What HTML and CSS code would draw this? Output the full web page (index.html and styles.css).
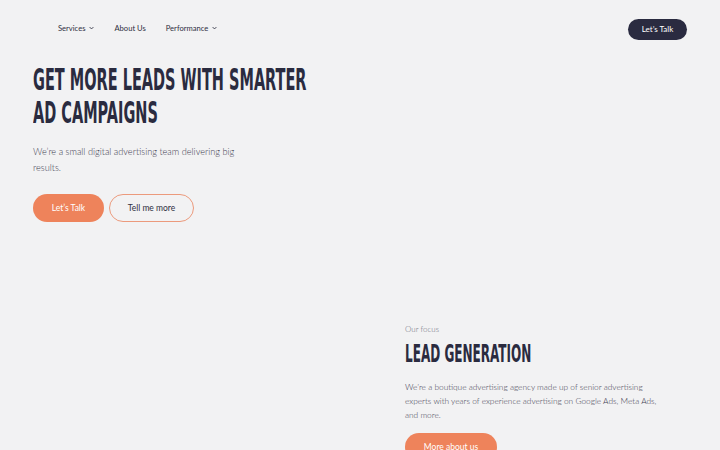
FILE: index.html
```html
<!DOCTYPE html>
<html lang="en">
<head>
<meta charset="utf-8">
<title>Leads</title>
<link rel="stylesheet" href="styles.css">
</head>
<body>
<header class="header">
  <nav class="nav">
    <a class="nav-link" href="#">Services <svg class="chev" viewBox="0 0 8 5" width="5" height="4"><path d="M1 1l3 3 3-3" fill="none" stroke="currentColor" stroke-width="1.4"/></svg></a>
    <a class="nav-link" href="#">About Us</a>
    <a class="nav-link" href="#">Performance <svg class="chev" viewBox="0 0 8 5" width="5" height="4"><path d="M1 1l3 3 3-3" fill="none" stroke="currentColor" stroke-width="1.4"/></svg></a>
  </nav>
  <a class="btn-dark" href="#">Let’s Talk</a>
</header>

<section class="hero">
  <h1 class="display hero-title"><span class="line">GET MORE LEADS WITH SMARTER</span><span class="line">AD CAMPAIGNS</span></h1>
  <p class="hero-text">We’re a small digital advertising team delivering big<br>results.</p>
  <div class="actions">
    <a class="btn btn-orange" href="#">Let’s Talk</a>
    <a class="btn btn-outline" href="#">Tell me more</a>
  </div>
</section>

<section class="focus">
  <div class="focus-media"></div>
  <div class="focus-body">
    <p class="eyebrow">Our focus</p>
    <h2 class="display focus-title">LEAD GENERATION</h2>
    <p class="focus-text">We’re a boutique advertising agency made up of senior advertising experts with years of experience advertising on Google Ads, Meta Ads, and more.</p>
    <a class="btn btn-orange btn-wide" href="#">More about us</a>
  </div>
</section>
</body>
</html>
```

FILE: styles.css
```css
* { box-sizing: border-box; }
html, body { margin: 0; padding: 0; }
body {
  background: #f2f2f3;
  font-family: Lato, "Open Sans", sans-serif;
  color: #2a2b3f;
  width: 720px;
  height: 450px;
  overflow: hidden;
}
a { text-decoration: none; color: inherit; }

.header {
  display: flex;
  align-items: center;
  justify-content: space-between;
  padding: 17px 33px 0 58px;
  height: 39px;
}
.nav { display: flex; align-items: center; gap: 20px; }
.nav-link {
  font-size: 7.6px;
  color: #2f3042;
  display: flex;
  align-items: center;
  gap: 4px;
}
.chev { display: block; }
.btn-dark {
  background: #2a2b40;
  color: #fff;
  font-size: 8px;
  height: 21px;
  width: 59px;
  border-radius: 11px;
  display: flex;
  align-items: center;
  justify-content: center;
  margin-top: 2px;
}

.display {
  font-family: "Liberation Sans Narrow", "DejaVu Sans Condensed", sans-serif;
  font-weight: 700;
  color: #2a2b3f;
  margin: 0;
  transform-origin: left top;
  white-space: nowrap;
}
.line { display: block; }
.hero { padding: 0 33px; }
.hero-title {
  font-size: 31px;
  line-height: 33px;
  margin-top: 24px;
  transform: scaleX(0.52);
}
.hero-text {
  font-size: 9.2px;
  line-height: 16px;
  color: #3e4052;
  font-weight: 300;
  margin: 15px 0 0;
}
.actions { display: flex; gap: 5px; margin-top: 18px; }
.btn {
  height: 28px;
  border-radius: 14px;
  font-size: 8.5px;
  display: flex;
  align-items: center;
  justify-content: center;
}
.btn-orange { background: #ee835b; color: #fff; width: 71px; }
.btn-outline { border: 1.5px solid #ec9a7c; width: 85px; color: #2f3042; }

.focus {
  display: grid;
  grid-template-columns: 372px 1fr;
  padding: 0 33px;
  margin-top: 102px;
}
.eyebrow { font-size: 8px; color: #6f7180; font-weight: 300; margin: 0; }
.focus-title {
  font-size: 25px;
  line-height: 28px;
  margin-top: 6px;
  transform: scaleX(0.535);
}
.focus-text {
  font-size: 8.3px;
  line-height: 14px;
  color: #3e4052;
  font-weight: 300;
  margin: 12px 0 0;
  max-width: 262px;
}
.btn-wide { width: 92px; margin-top: 11px; }
```
